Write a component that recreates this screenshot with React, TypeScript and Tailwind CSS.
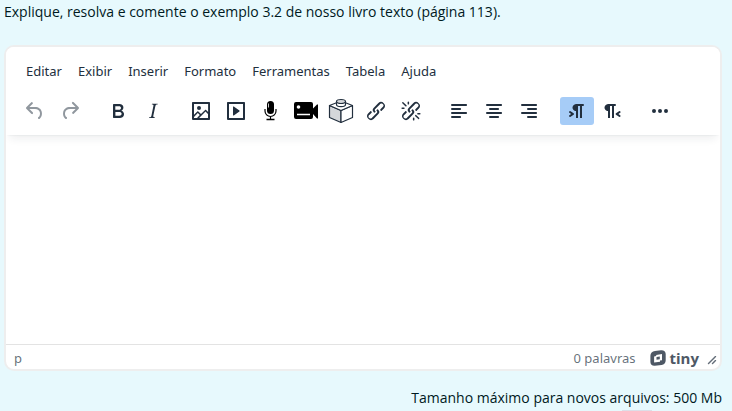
import type { ReactNode } from "react";

const LINK =
  "M6.2 12.3a1 1 0 0 1 1.4 1.4l-2 2a2 2 0 1 0 2.6 2.8l4.8-4.8a1 1 0 0 0 0-1.4 1 1 0 1 1 1.4-1.3 2.9 2.9 0 0 1 0 4L9.6 20a3.9 3.9 0 0 1-5.5-5.5l2-2Zm11.6-.6a1 1 0 0 1-1.4-1.4l2-2a2 2 0 1 0-2.6-2.8L11 10.3a1 1 0 0 0 0 1.4A1 1 0 1 1 9.6 13a2.9 2.9 0 0 1 0-4L14.4 4a3.9 3.9 0 0 1 5.5 5.5l-2 2Z";

const PATHS = {
  undo: "M6.4 8H12c3.7 0 6.2 2 6.8 5.1.6 2.7-.4 5.6-2.3 6.8a1 1 0 0 1-1-1.8c1.1-.6 1.8-2.7 1.4-4.6-.5-2.1-2.1-3.5-4.9-3.5H6.4l3.3 3.3a1 1 0 1 1-1.4 1.4l-5-5a1 1 0 0 1 0-1.4l5-5a1 1 0 0 1 1.4 1.4L6.4 8Z",
  redo: "M17.6 10H12c-2.8 0-4.4 1.4-4.9 3.5-.4 2 .3 4 1.4 4.6a1 1 0 1 1-1 1.8c-2-1.2-2.9-4.1-2.3-6.8.6-3 3-5.1 6.8-5.1h5.6l-3.3-3.3a1 1 0 1 1 1.4-1.4l5 5a1 1 0 0 1 0 1.4l-5 5a1 1 0 0 1-1.4-1.4l3.3-3.3Z",
  bold: "M7.8 19c-.3 0-.5 0-.6-.2l-.2-.5V5.7c0-.2 0-.4.2-.5l.6-.2h5c1.5 0 2.7.3 3.5 1 .7.6 1.1 1.4 1.1 2.5a3 3 0 0 1-.6 1.9c-.4.6-1 1-1.6 1.2.4.1.9.3 1.3.6s.8.7 1 1.2c.4.4.5 1 .5 1.6 0 1.3-.4 2.3-1.3 3-.8.7-2.1 1-3.8 1H7.8Zm5-8.3c.6 0 1.2-.1 1.6-.5.4-.3.6-.7.6-1.3 0-1.1-.8-1.7-2.3-1.7H9.3v3.5h3.4Zm.5 6c.7 0 1.3-.1 1.7-.4.4-.4.6-.9.6-1.5s-.2-1-.7-1.4c-.4-.3-1-.4-2-.4H9.4v3.8h4Z",
  italic:
    "m16.7 4.7-.1.9h-.3c-.6 0-1 0-1.4.3-.3.3-.4.6-.5 1.1l-2.1 9.8v.6c0 .5.4.8 1.4.8h.2l-.2.8H8l.2-.8h.2c1.1 0 1.8-.5 2-1.5l2-9.8.1-.5c0-.6-.4-.8-1.4-.8h-.3l.2-.9h5.8Z",
  image:
    "m5 15.7 3.3-3.2c.3-.3.7-.3 1 0L12 15l4.1-4c.3-.4.8-.4 1 0l2 1.9V5H5v10.7ZM5 18V19h3l2.8-2.9-2-2L5 17.9Zm14-3-2.5-2.4-6.4 6.5H19v-4ZM4 3h16c.6 0 1 .4 1 1v16c0 .6-.4 1-1 1H4a1 1 0 0 1-1-1V4c0-.6.4-1 1-1Zm6 8a2 2 0 1 0 0-4 2 2 0 0 0 0 4Z",
  media:
    "M4 3h16c.6 0 1 .4 1 1v16c0 .6-.4 1-1 1H4a1 1 0 0 1-1-1V4c0-.6.4-1 1-1Zm1 2v14h14V5H5Zm4.8 2.6 5.6 4a.5.5 0 0 1 0 .8l-5.6 4A.5.5 0 0 1 9 16V8a.5.5 0 0 1 .8-.4Z",
  link: LINK,
  unlink:
    LINK +
    "M7.6 6.3a.8.8 0 0 1-1 1.1L3.3 4.2a.7.7 0 1 1 1-1l3.2 3.1ZM5.1 8.6a.8.8 0 0 1 0 1.5H3a.8.8 0 0 1 0-1.5H5Zm5-3.5a.8.8 0 0 1-1.5 0V3a.8.8 0 0 1 1.5 0V5Zm6 11.8a.8.8 0 0 1 1-1l3.2 3.2a.8.8 0 0 1-1 1L16 17Zm-2.2 2a.8.8 0 0 1 1.5 0V21a.8.8 0 0 1-1.5 0V19Zm5-3.5a.7.7 0 1 1 0-1.5H21a.8.8 0 0 1 0 1.5H19Z",
  left: "M5 5h14c.6 0 1 .4 1 1s-.4 1-1 1H5a1 1 0 1 1 0-2Zm0 4h8c.6 0 1 .4 1 1s-.4 1-1 1H5a1 1 0 1 1 0-2Zm0 8h8c.6 0 1 .4 1 1s-.4 1-1 1H5a1 1 0 0 1 0-2Zm0-4h14c.6 0 1 .4 1 1s-.4 1-1 1H5a1 1 0 0 1 0-2Z",
  center:
    "M5 5h14c.6 0 1 .4 1 1s-.4 1-1 1H5a1 1 0 1 1 0-2Zm3 4h8c.6 0 1 .4 1 1s-.4 1-1 1H8a1 1 0 1 1 0-2Zm0 8h8c.6 0 1 .4 1 1s-.4 1-1 1H8a1 1 0 0 1 0-2Zm-3-4h14c.6 0 1 .4 1 1s-.4 1-1 1H5a1 1 0 0 1 0-2Z",
  right:
    "M5 5h14c.6 0 1 .4 1 1s-.4 1-1 1H5a1 1 0 1 1 0-2Zm6 4h8c.6 0 1 .4 1 1s-.4 1-1 1h-8a1 1 0 0 1 0-2Zm0 8h8c.6 0 1 .4 1 1s-.4 1-1 1h-8a1 1 0 0 1 0-2Zm-6-4h14c.6 0 1 .4 1 1s-.4 1-1 1H5a1 1 0 0 1 0-2Z",
  ltr: "M11 5h7a1 1 0 0 1 0 2h-1v12h-2V7h-2v12h-2v-7c-.5 0-1 0-1.4-.3A3.4 3.4 0 0 1 7.8 10a3.3 3.3 0 0 1 0-2.8 3.4 3.4 0 0 1 1.8-1.8L11 5ZM4.4 16.2 6.2 15l-1.8-1.2a1 1 0 0 1 1.2-1.6l3 2a1 1 0 0 1 0 1.6l-3 2a1 1 0 1 1-1.2-1.6Z",
  rtl: "M8 5h7a1 1 0 0 1 0 2h-1v12h-2V7h-2v12H8v-7c-.5 0-1 0-1.4-.3A3.4 3.4 0 0 1 4.8 10a3.3 3.3 0 0 1 0-2.8 3.4 3.4 0 0 1 1.8-1.8L8 5Zm12.2 11.2a1 1 0 1 1-1.2 1.6l-3-2a1 1 0 0 1 0-1.6l3-2a1 1 0 1 1 1.2 1.6L18.4 15l1.8 1.2Z",
  more: "M6 10a2 2 0 1 0 0 4 2 2 0 0 0 0-4Zm12 0a2 2 0 1 0 0 4 2 2 0 0 0 0-4Zm-6 0a2 2 0 1 0 0 4 2 2 0 0 0 0-4Z",
};

function Icon({ name }: { name: keyof typeof PATHS }) {
  return (
    <svg width="24" height="24" viewBox="0 0 24 24" fill="currentColor" fillRule="evenodd" aria-hidden="true">
      <path d={PATHS[name]} />
    </svg>
  );
}

function MicIcon() {
  return (
    <svg width="24" height="24" viewBox="0 0 24 24" fill="none" stroke="#000" aria-hidden="true">
      <rect x="8" y="2" width="7" height="13" rx="3.5" fill="#000" stroke="none" />
      <path d="M6 10v2a5.5 5.5 0 0 0 11 0v-2M11.5 17.5V20" strokeWidth="1.2" />
      <path d="M7.5 20.5h8" strokeWidth="1.5" />
      <path d="M9.5 4.5v4" stroke="#fff" strokeWidth="0.8" />
    </svg>
  );
}

function CameraIcon() {
  return (
    <svg width="26" height="24" viewBox="0 0 26 24" aria-hidden="true">
      <path d="M3 3h15a2 2 0 0 1 2 2v4.5L24 5.5h1v14h-1L20 15v3a2 2 0 0 1-2 2H3a2 2 0 0 1-2-2V5a2 2 0 0 1 2-2Z" fill="#000" />
      <circle cx="5.500" cy="8" r="1.8" fill="#fff" />
      <path d="M4 15.5h13" stroke="#fff" strokeWidth="1.5" />
    </svg>
  );
}

function BlockIcon() {
  return (
    <svg width="26" height="26" viewBox="0 0 26 26" stroke="#222f3e" strokeWidth="1.2" strokeLinejoin="round" aria-hidden="true">
      <path d="M1.5 7.5 13 12.5v12l-11.5-5Z" fill="#d5d7da" />
      <path d="M24.5 7.5 13 12.5v12l11.5-5Z" fill="#fff" />
      <path d="M13 3 1.5 7.5 13 12.5l11.5-5Z" fill="#fff" />
      <path d="M8.5 3.5v3c0 1.2 2 2.2 4.5 2.2s4.5-1 4.5-2.2v-3" fill="#fff" />
      <ellipse cx="13" cy="3.5" rx="4.5" ry="2" fill="#d5d7da" />
    </svg>
  );
}

function TinyMark() {
  return (
    <svg width="16" height="16" viewBox="0 0 16 16" aria-hidden="true">
      <path
        fill="currentColor"
        d="M5 .9 11 .2C13.800 0 15.700 1.500 15.700 4v6.200c0 2.600-1.500 4.400-4.200 4.800l-6.600.8C2.200 16.100.4 14.500.4 12V5.800C.4 3.200 2.200 1.200 5 .9Z"
      />
      <path
        fill="#fff"
        fillRule="evenodd"
        d="M6.200 4.900 12 4.100v6.100l-2 .3v1.200l-5.900.8V6.400l2.100-.3ZM6.500 7.100v2.700l3.300-.5V6.600Z"
      />
    </svg>
  );
}

type Tool = { label: string; icon: ReactNode; disabled?: boolean; active?: boolean };

const GROUPS: Tool[][] = [
  [
    { label: "Desfazer", icon: <Icon name="undo" />, disabled: true },
    { label: "Refazer", icon: <Icon name="redo" />, disabled: true },
  ],
  [
    { label: "Negrito", icon: <Icon name="bold" /> },
    { label: "Itálico", icon: <Icon name="italic" /> },
  ],
  [
    { label: "Imagem", icon: <Icon name="image" /> },
    { label: "Multimídia", icon: <Icon name="media" /> },
    { label: "Gravar áudio", icon: <MicIcon /> },
    { label: "Gravar vídeo", icon: <CameraIcon /> },
    { label: "Conteúdo interativo", icon: <BlockIcon /> },
    { label: "Link", icon: <Icon name="link" /> },
    { label: "Remover link", icon: <Icon name="unlink" /> },
  ],
  [
    { label: "Alinhar à esquerda", icon: <Icon name="left" /> },
    { label: "Centralizar", icon: <Icon name="center" /> },
    { label: "Alinhar à direita", icon: <Icon name="right" /> },
  ],
  [
    { label: "Da esquerda para a direita", icon: <Icon name="ltr" />, active: true },
    { label: "Da direita para a esquerda", icon: <Icon name="rtl" /> },
  ],
  [{ label: "Mais", icon: <Icon name="more" /> }],
];

const MENUS = ["Editar", "Exibir", "Inserir", "Formato", "Ferramentas", "Tabela", "Ajuda"];

function ToolButton({ label, icon, disabled, active }: Tool) {
  return (
    <button
      type="button"
      aria-label={label}
      aria-pressed={active}
      disabled={disabled}
      className={`flex h-7 w-[34px] shrink-0 items-center justify-center rounded-[3px] disabled:text-[#222f3e]/50 ${
        active ? "bg-[#a6ccf7]" : ""
      }`}
    >
      {icon}
    </button>
  );
}

export default function App() {
  return (
    <main className="flex h-screen flex-col overflow-hidden bg-[#e7f9fd] pr-[10px] pl-1 font-['Open_Sans','Noto_Sans',sans-serif] text-sm text-[#001a1e]">
      <label htmlFor="answer" className="block pt-[2px] leading-5">
        Explique, resolva e comente o exemplo 3.2 de nosso livro texto (página 113).
      </label>

      <section className="mt-[23px] flex min-h-0 flex-1 flex-col overflow-hidden rounded-[10px] border-2 border-[#eee] bg-white font-['Noto_Sans','Open_Sans',sans-serif] text-[#222f3e]">
        <header className="relative shrink-0 bg-white pb-[10px] shadow-[0_2px_2px_-2px_rgba(34,47,62,0.1),0_8px_8px_-4px_rgba(34,47,62,0.07)]">
          <nav className="flex gap-4 px-5 pt-[14px] text-[13px] leading-5">
            {MENUS.map((menu) => (
              <button key={menu} type="button">
                {menu}
              </button>
            ))}
          </nav>
          <div role="toolbar" aria-label="Formatação" className="mt-4 flex gap-[14px] px-3">
            {GROUPS.map((group, i) => (
              <div key={i} className="flex gap-px">
                {group.map((tool) => (
                  <ToolButton key={tool.label} {...tool} />
                ))}
              </div>
            ))}
          </div>
        </header>

        <textarea id="answer" className="min-h-0 w-full flex-1 resize-none p-3 outline-none" />

        <footer className="flex h-[25px] shrink-0 items-center border-t border-[#e3e3e3] pt-[2px] pr-[3px] pl-2 text-[13px] text-[#222f3e]/70">
          <span className="flex-1">p</span>
          <button type="button">0 palavras</button>
          <a href="#tiny" className="ml-[14px] flex items-center gap-1 text-[#4e5865]" aria-label="tiny">
            <TinyMark />
            <span className="font-['Open_Sans',sans-serif] text-[15px] leading-4 font-bold">tiny</span>
          </a>
          <svg className="mt-1 ml-2" width="10" height="10" viewBox="0 0 10 10" fill="currentColor" aria-hidden="true">
            <path d="M8.1 1.1A.5.5 0 1 1 9 2l-7 7A.5.5 0 1 1 1 8l7-7ZM8.1 5.1A.5.5 0 1 1 9 6l-3 3A.5.5 0 1 1 5 8l3-3Z" />
          </svg>
        </footer>
      </section>

      <div className="flex h-10 shrink-0 flex-col items-end justify-between pt-4">
        <p className="leading-[22px]">Tamanho máximo para novos arquivos: 500 Mb</p>
        <div className="mr-[70px] h-px w-[30px] bg-[#dcdfe8]" />
      </div>
    </main>
  );
}
